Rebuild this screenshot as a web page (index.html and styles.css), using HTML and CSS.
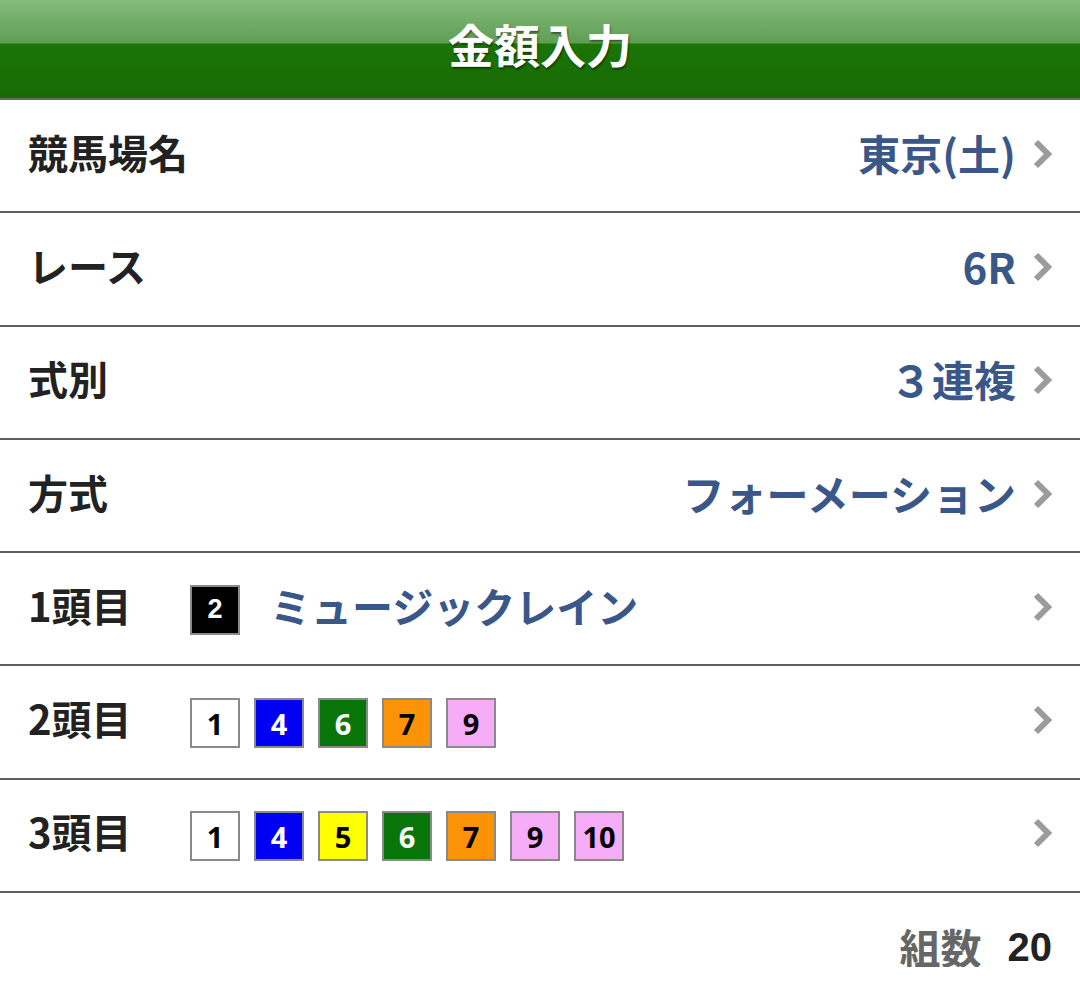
FILE: index.html
```html
<!DOCTYPE html>
<html lang="ja">
<head>
<meta charset="utf-8">
<title>金額入力</title>
<link rel="stylesheet" href="styles.css">
</head>
<body>
<header class="topbar"><h1 class="title">金額入力</h1></header>
<ul class="list">
  <li class="row"><span class="label">競馬場名</span><span class="value">東京(土)</span><svg class="chev" viewBox="0 0 24 32"><polyline points="6,4 18,16 6,28"/></svg></li>
  <li class="row"><span class="label">レース</span><span class="value">6R</span><svg class="chev" viewBox="0 0 24 32"><polyline points="6,4 18,16 6,28"/></svg></li>
  <li class="row"><span class="label">式別</span><span class="value">３連複</span><svg class="chev" viewBox="0 0 24 32"><polyline points="6,4 18,16 6,28"/></svg></li>
  <li class="row"><span class="label">方式</span><span class="value">フォーメーション</span><svg class="chev" viewBox="0 0 24 32"><polyline points="6,4 18,16 6,28"/></svg></li>
  <li class="row"><span class="label lw">1頭目</span><span class="badges"><span class="b c-black">2</span></span><span class="horse">ミュージックレイン</span><svg class="chev" viewBox="0 0 24 32"><polyline points="6,4 18,16 6,28"/></svg></li>
  <li class="row"><span class="label lw">2頭目</span><span class="badges"><span class="b c-white">1</span><span class="b c-blue">4</span><span class="b c-green">6</span><span class="b c-orange">7</span><span class="b c-pink">9</span></span><svg class="chev" viewBox="0 0 24 32"><polyline points="6,4 18,16 6,28"/></svg></li>
  <li class="row"><span class="label lw">3頭目</span><span class="badges"><span class="b c-white">1</span><span class="b c-blue">4</span><span class="b c-yellow">5</span><span class="b c-green">6</span><span class="b c-orange">7</span><span class="b c-pink">9</span><span class="b c-pink">10</span></span><svg class="chev" viewBox="0 0 24 32"><polyline points="6,4 18,16 6,28"/></svg></li>
</ul>
<div class="total"><span class="total-label">組数</span><span class="total-num">20</span></div>
</body>
</html>
```
FILE: styles.css
```css
html, body {
  margin: 0;
  padding: 0;
  background: #fff;
  font-family: "Noto Sans CJK JP", "Noto Sans", sans-serif;
}
.topbar {
  height: 98px;
  border-bottom: 2px solid #6a6a6a;
  background: linear-gradient(to bottom, #84bb7b 0px, #5f9e54 43px, #1b7406 44px, #176b04 98px);
  display: flex;
  justify-content: center;
}
.title {
  margin: 0;
  padding-top: 13px;
  font-size: 46px;
  line-height: 60px;
  font-weight: 700;
  color: #fff;
  text-shadow: 1px 2px 2px rgba(0,0,0,0.45);
}
.list {
  list-style: none;
  margin: 0;
  padding: 0;
}
.row {
  height: 111.3px;
  border-bottom: 2px solid #5e5e5e;
  display: flex;
  align-items: center;
  padding: 0 26px 0 28px;
}
.label {
  font-size: 40px;
  font-weight: 700;
  color: #222;
  line-height: 1;
  margin-top: -8px;
}
.lw {
  width: 162px;
  flex: none;
}
.value {
  margin-left: auto;
  font-size: 42px;
  font-weight: 700;
  color: #3a578a;
  line-height: 1;
  margin-top: -6px;
}
.chev {
  width: 24px;
  height: 32px;
  margin-left: 14px;
  margin-top: -4px;
  flex: none;
}
.chev polyline {
  fill: none;
  stroke: #9b9b9b;
  stroke-width: 6;
  stroke-linejoin: miter;
}
.badges {
  display: flex;
  gap: 14px;
  margin-top: 2px;
  margin-right: auto;
}
.horse + .chev, .badges + .chev { margin-left: auto; }
.row .horse {
  font-size: 41px;
  font-weight: 700;
  color: #3a578a;
  line-height: 1;
  margin-left: 30px;
  margin-top: -6px;
  margin-right: auto;
}
.row .badges:has(+ .horse) { margin-right: 0; }
.b {
  width: 46px;
  height: 46px;
  border: 2px solid #8a8a8a;
  display: flex;
  align-items: center;
  justify-content: center;
  font-family: "Open Sans", "Noto Sans", sans-serif;
  font-weight: 700;
  font-size: 29px;
  line-height: 1;
}
.c-black { background: #000; color: #fff; font-family: "Liberation Sans", sans-serif; font-size: 27px; }
.c-white { background: #fff; color: #000; }
.c-blue { background: #0000f2; color: #fff; }
.c-green { background: #07750a; color: #fff; }
.c-orange { background: #fc9306; color: #000; }
.c-pink { background: #f6acf6; color: #000; }
.c-yellow { background: #ffff00; color: #000; }
.total {
  display: flex;
  justify-content: flex-end;
  align-items: center;
  padding: 33px 28px 0 0;
  gap: 26px;
}
.total-label {
  font-size: 41px;
  font-weight: 700;
  color: #666;
  line-height: 1;
}
.total-num {
  font-family: "Liberation Sans", "Noto Sans", sans-serif;
  font-size: 40px;
  font-weight: 700;
  color: #222;
  line-height: 1;
}
```
